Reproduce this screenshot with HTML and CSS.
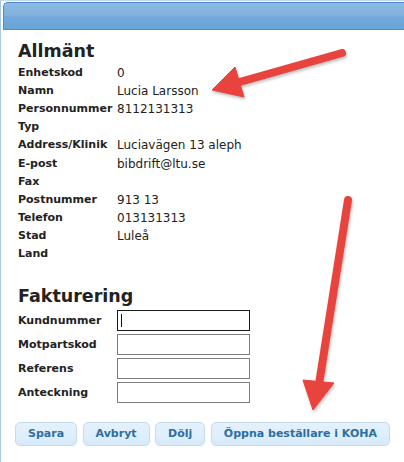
FILE: index.html
```html
<!DOCTYPE html>
<html lang="sv">
<head>
<meta charset="utf-8">
<title>Beställare</title>
<link rel="stylesheet" href="styles.css">
</head>
<body>
<div class="dialog">
  <div class="titlebar"></div>
  <div class="content">
    <h2 class="section-title">Allmänt</h2>
    <dl class="info">
      <dt>Enhetskod</dt><dd>0</dd>
      <dt>Namn</dt><dd>Lucia Larsson</dd>
      <dt>Personnummer</dt><dd>8112131313</dd>
      <dt>Typ</dt><dd></dd>
      <dt>Address/Klinik</dt><dd>Luciavägen 13 aleph</dd>
      <dt>E-post</dt><dd>bibdrift@ltu.se</dd>
      <dt>Fax</dt><dd></dd>
      <dt>Postnummer</dt><dd>913 13</dd>
      <dt>Telefon</dt><dd>013131313</dd>
      <dt>Stad</dt><dd>Luleå</dd>
      <dt>Land</dt><dd></dd>
    </dl>
    <h2 class="section-title billing">Fakturering</h2>
    <div class="form">
      <label for="kund">Kundnummer</label>
      <span class="field"><input id="kund" class="focused" type="text"><span class="caret"></span></span>
      <label for="motpart">Motpartskod</label>
      <span class="field"><input id="motpart" type="text"></span>
      <label for="ref">Referens</label>
      <span class="field"><input id="ref" type="text"></span>
      <label for="ant">Anteckning</label>
      <span class="field"><input id="ant" type="text"></span>
    </div>
  </div>
  <div class="buttons">
    <button class="btn">Spara</button>
    <button class="btn">Avbryt</button>
    <button class="btn">Dölj</button>
    <button class="btn">Öppna beställare i KOHA</button>
  </div>
</div>
<svg class="arrows" width="404" height="462" viewBox="0 0 404 462" aria-hidden="true">
  <g fill="#e8433d" stroke="#e8433d">
    <line x1="342" y1="53" x2="236" y2="83" stroke-width="8" stroke-linecap="round"/>
    <polygon points="212,90 235,67 244,97" stroke-width="1" stroke-linejoin="round"/>
    <line x1="348" y1="200" x2="319" y2="384" stroke-width="8" stroke-linecap="round"/>
    <polygon points="313,410 303,380 334,383" stroke-width="1" stroke-linejoin="round"/>
  </g>
</svg>
</body>
</html>
```
FILE: styles.css
```css
html, body {
  margin: 0;
  padding: 0;
  background: #ffffff;
  overflow: hidden;
}
body {
  width: 404px;
  height: 462px;
  position: relative;
  font-family: "DejaVu Sans", Verdana, sans-serif;
  font-size: 11px;
  color: #222222;
}
.dialog {
  width: 404px;
  height: 462px;
  overflow: hidden;
  border-left: 1px solid #a6c9e2;
  border-top: 1px solid #c3dcef;
  padding: 1px 0 0 2px;
  box-sizing: border-box;
}
.titlebar {
  height: 28px;
  box-sizing: border-box;
  border: 1px solid #4d8cc6;
  border-right: none;
  border-radius: 5px 0 0 0;
  background: linear-gradient(to bottom, #8dbae2 0%, #82b3de 45%, #72a9da 55%, #6aa3d6 100%);
}
.content {
  padding: 11px 0 0 15px;
}
.section-title {
  margin: 0;
  font-size: 17.5px;
  line-height: 20px;
  font-weight: bold;
  color: #222222;
}
.info {
  display: grid;
  grid-template-columns: 99px 1fr;
  grid-auto-rows: 18.2px;
  margin: 2.6px 0 0 0;
  line-height: 18.2px;
}
.info dt {
  font-weight: bold;
  font-size: 11px;
  white-space: nowrap;
}
.info dd {
  margin: 0;
  font-size: 12px;
  white-space: nowrap;
}
.billing {
  margin-top: 22px;
}
.form {
  display: grid;
  grid-template-columns: 99px 133px;
  grid-auto-rows: 21px;
  row-gap: 3px;
  margin-top: 4px;
  align-items: center;
}
.form label {
  font-weight: bold;
  font-size: 11px;
  white-space: nowrap;
}
.field {
  position: relative;
  display: block;
  height: 21px;
}
.field input {
  box-sizing: border-box;
  width: 133px;
  height: 21px;
  margin: 0;
  padding: 0 3px;
  border: 1px solid #7d7d7d;
  background: #ffffff;
  font-family: inherit;
  font-size: 11px;
  outline: none;
}
.field input.focused {
  border-color: #1a1a1a;
}
.caret {
  position: absolute;
  left: 4px;
  top: 4px;
  width: 1px;
  height: 13px;
  background: #111111;
}
.buttons {
  display: flex;
  gap: 5.5px;
  margin-top: 19px;
  padding-left: 12px;
}
.btn {
  height: 24px;
  box-sizing: border-box;
  padding: 0 12px;
  margin: 0;
  border: 1px solid #c5dbec;
  border-radius: 5px;
  background: linear-gradient(to bottom, #e4f1fc 0%, #dfeffc 50%, #d7eafa 100%);
  color: #2e6e9e;
  font-family: "DejaVu Sans", Verdana, sans-serif;
  font-size: 11px;
  font-weight: bold;
  line-height: 22px;
  white-space: nowrap;
}
.arrows {
  position: absolute;
  left: 0;
  top: 0;
  pointer-events: none;
  filter: drop-shadow(1px 2px 1.5px rgba(0, 0, 0, 0.25));
}
```
